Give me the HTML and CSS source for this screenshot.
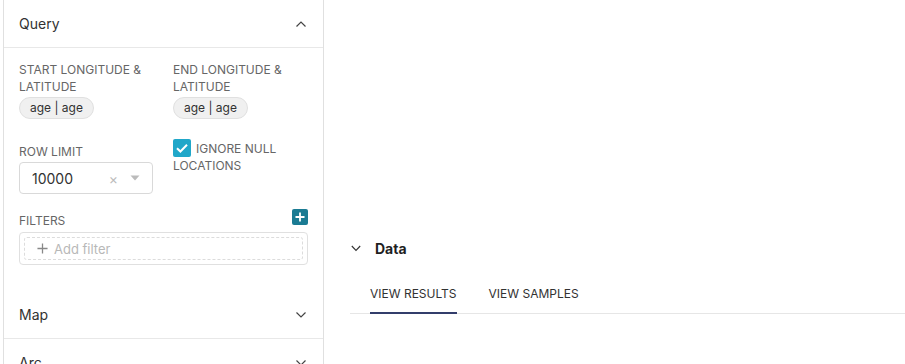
FILE: index.html
```html
<!DOCTYPE html>
<html>
<head>
<meta charset="utf-8">
<link rel="stylesheet" href="styles.css">
</head>
<body>
<div class="page">
  <aside class="panel">
    <section class="section section-open">
      <div class="section-header">
        <span class="section-title">Query</span>
        <svg class="chev" width="12" height="8" viewBox="0 0 12 8"><path d="M1.5 6.5 L6 2 L10.5 6.5" fill="none" stroke="#444" stroke-width="1.2"/></svg>
      </div>
      <div class="section-body">
        <div class="row">
          <div class="control">
            <div class="label">START LONGITUDE &amp; LATITUDE</div>
            <span class="pill">age | age</span>
          </div>
          <div class="control">
            <div class="label">END LONGITUDE &amp; LATITUDE</div>
            <span class="pill">age | age</span>
          </div>
        </div>
        <div class="row row2">
          <div class="control">
            <div class="label">ROW LIMIT</div>
            <div class="select">
              <span class="select-value">10000</span>
              <span class="select-clear">×</span>
              <svg class="select-arrow" width="10" height="6" viewBox="0 0 10 6"><path d="M0.5 0.5 L9.5 0.5 L5 5.5 Z" fill="#bbb"/></svg>
            </div>
          </div>
          <div class="control">
            <div class="check-label"><span class="checkbox"><svg width="18" height="18" viewBox="0 0 18 18"><path d="M4 9.2 L7.4 12.5 L14 5.8" fill="none" stroke="#fff" stroke-width="2"/></svg></span>IGNORE NULL LOCATIONS</div>
          </div>
        </div>
        <div class="filters">
          <div class="filters-head">
            <span class="label">FILTERS</span>
            <span class="add-btn"><svg width="10" height="10" viewBox="0 0 10 10"><path d="M5 0.5 V9.5 M0.5 5 H9.5" stroke="#fff" stroke-width="1.8"/></svg></span>
          </div>
          <div class="filter-box">
            <div class="filter-inner">
              <svg width="11" height="11" viewBox="0 0 12 12"><path d="M6 0.5 V11.5 M0.5 6 H11.5" stroke="#888" stroke-width="1.4"/></svg>
              <span>Add filter</span>
            </div>
          </div>
        </div>
      </div>
    </section>
    <section class="section">
      <div class="section-header">
        <span class="section-title">Map</span>
        <svg class="chev" width="12" height="8" viewBox="0 0 12 8"><path d="M1.5 1.5 L6 6 L10.5 1.5" fill="none" stroke="#444" stroke-width="1.2"/></svg>
      </div>
    </section>
    <section class="section">
      <div class="section-header">
        <span class="section-title">Arc</span>
        <svg class="chev" width="12" height="8" viewBox="0 0 12 8"><path d="M1.5 1.5 L6 6 L10.5 1.5" fill="none" stroke="#444" stroke-width="1.2"/></svg>
      </div>
    </section>
  </aside>
  <main class="main">
    <div class="chart-area"></div>
    <div class="data">
      <div class="data-head">
        <svg width="10" height="7" viewBox="0 0 10 7"><path d="M0.8 1 L5 5.5 L9.2 1" fill="none" stroke="#333" stroke-width="1.1"/></svg>
        <span class="data-title">Data</span>
      </div>
      <div class="tabs">
        <div class="tab active">VIEW RESULTS</div>
        <div class="tab">VIEW SAMPLES</div>
      </div>
    </div>
  </main>
</div>
</body>
</html>
```
FILE: styles.css
```css
* { box-sizing: border-box; }
html, body { margin: 0; padding: 0; background: #fff; }
body {
  font-family: Inter, "Noto Sans", sans-serif;
  color: #323232;
  overflow: hidden;
  height: 364px;
}
.page {
  display: flex;
  height: 364px;
}
.panel {
  margin-left: 3px;
  width: 321px;
  flex: none;
  border-left: 1px solid #e0e0e0;
  border-right: 1px solid #e0e0e0;
  height: 364px;
  overflow: hidden;
}
.section { border-bottom: 1px solid #e8e8e8; }
.section-open { border-bottom: none; }
.section-open .section-header { border-bottom: 1px solid #e8e8e8; height: 48px; }
.section-header {
  height: 47px;
  display: flex;
  align-items: center;
  justify-content: space-between;
  padding: 0 16px 0 15px;
}
.section-title { font-size: 14px; color: #323232; }
.section-body { padding: 13px 15px 26px 15px; }
.row {
  display: grid;
  grid-template-columns: 134px 134px;
  column-gap: 20px;
}
.row2 { margin-top: 18px; }
.label {
  font-size: 12px;
  line-height: 17px;
  color: #666;
}
.pill {
  display: inline-block;
  margin-top: 2px;
  height: 22px;
  line-height: 20px;
  padding: 0 10px;
  font-size: 12px;
  color: #323232;
  background: #f0f0f0;
  border: 1px solid #e0e0e0;
  border-radius: 11px;
}
.row2 .label { margin-top: 6px; }
.select {
  margin-top: 2px;
  height: 32px;
  border: 1px solid #d9d9d9;
  border-radius: 4px;
  display: flex;
  align-items: center;
  padding: 0 12px;
}
.select-value { font-size: 14px; color: #323232; flex: 1; }
.select-clear { color: #bbb; font-size: 14px; margin-right: 12px; }
.check-label {
  margin-top: 2px;
  font-size: 12px;
  line-height: 17px;
  color: #666;
}
.checkbox {
  display: inline-block;
  width: 18px;
  height: 18px;
  background: #20a7c9;
  border-radius: 2px;
  vertical-align: -4px;
  margin-right: 5px;
}
.checkbox svg { display: block; }
.filters { margin-top: 18px; }
.filters-head {
  display: flex;
  justify-content: space-between;
  align-items: center;
  height: 17px;
}
.add-btn {
  width: 16px;
  height: 16px;
  background: #1a7b93;
  border-radius: 2px;
  display: flex;
  align-items: center;
  justify-content: center;
  margin-top: -8px;
}
.filter-box {
  margin-top: 3px;
  border: 1px solid #e0e0e0;
  border-radius: 4px;
  padding: 4px;
}
.filter-inner {
  height: 23px;
  border: 1px dashed #dcdcdc;
  border-radius: 3px;
  display: flex;
  align-items: center;
  padding-left: 12px;
  gap: 6px;
  font-size: 13px;
  color: #b8b8b8;
}
.main {
  flex: 1;
  display: flex;
  flex-direction: column;
  padding-left: 26px;
  min-width: 0;
}
.chart-area { height: 236px; flex: none; }
.data-head {
  display: flex;
  align-items: center;
  height: 24px;
  gap: 14px;
  padding-left: 1px;
}
.data-title { font-size: 14px; font-weight: 700; color: #1f1f1f; }
.tabs {
  margin-top: 20px;
  display: flex;
  gap: 32px;
  padding-left: 20px;
  border-bottom: 1px solid #e6e6e6;
  margin-right: -1px;
}
.tab {
  font-size: 12px;
  color: #323232;
  padding: 6px 0 11px;
  border-bottom: 2px solid transparent;
  margin-bottom: -1px;
}
.tab.active { border-bottom-color: #323d6b; }
```
